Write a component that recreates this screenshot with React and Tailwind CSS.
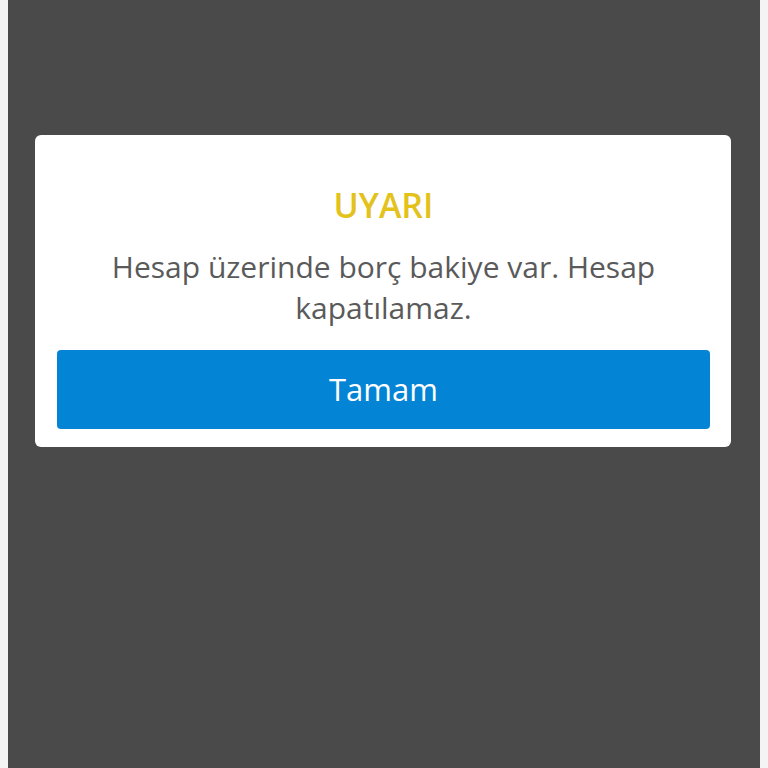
export default function App() {
  return (
    <div className="min-h-screen w-full bg-[#f4f4f4] flex" style={{ fontFamily: '"Open Sans", "Noto Sans", sans-serif' }}>
      <div className="ml-[8px] mr-[8px] flex-1 bg-[#4a4a4a] min-h-screen pt-[135px]">
        <div className="ml-[27px] mr-[29px] bg-white rounded-[6px] pl-[22px] pr-[21px] pt-[50px] pb-[18px] flex flex-col items-center">
          <h2 className="text-[34px] leading-[40px] font-semibold text-[#e4c21c]">UYARI</h2>
          <p className="mt-[21px] text-[30px] leading-[41px] text-[#5a5a5a] text-center px-[30px]">
            Hesap üzerinde borç bakiye var. Hesap kapatılamaz.
          </p>
          <button className="mt-[22px] w-full h-[79px] rounded-[4px] bg-[#0484d4] text-white text-[31px]">
            Tamam
          </button>
        </div>
      </div>
    </div>
  )
}
